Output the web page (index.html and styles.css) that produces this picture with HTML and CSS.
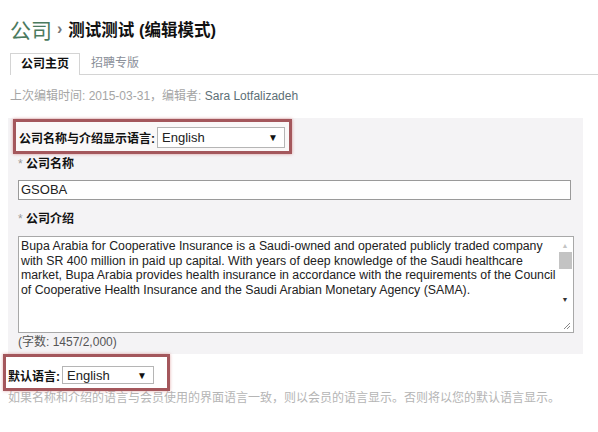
FILE: index.html
```html
<!DOCTYPE html>
<html lang="zh">

<head>
    <meta charset="UTF-8">
    <meta name="viewport" content="width=device-width, initial-scale=1.0">
    <title>公司主页</title>
    <link rel="stylesheet" href="styles.css">
</head>

<body>
    <div class="page">
        <h1 class="title">
            <span class="crumb">公司</span>
            <span class="sep">›</span>
            <span class="name">测试测试 (编辑模式)</span>
        </h1>

        <div class="tabs">
            <div class="tab active">公司主页</div>
            <div class="tab">招聘专版</div>
        </div>

        <p class="meta">上次编辑时间: 2015-03-31，编辑者: <span class="editor">Sara Lotfalizadeh</span></p>

        <div class="panel">
            <div class="mark mark-top">
                <span class="label">公司名称与介绍显示语言:</span>
                <div class="select select-wide">
                    <span>English</span>
                    <span class="arrow">▼</span>
                </div>
            </div>

            <div class="field-label"><span class="req">*</span> 公司名称</div>
            <div class="input">GSOBA</div>

            <div class="field-label"><span class="req">*</span> 公司介绍</div>
            <div class="textarea">
                <div class="textarea-text">
                    Bupa Arabia for Cooperative Insurance is a Saudi-owned and operated publicly traded company<br>
                    with SR 400 million in paid up capital. With years of deep knowledge of the Saudi healthcare<br>
                    market, Bupa Arabia provides health insurance in accordance with the requirements of the Council<br>
                    of Cooperative Health Insurance and the Saudi Arabian Monetary Agency (SAMA).
                </div>
                <div class="scrollbar">
                    <span class="sb-up">▲</span>
                    <span class="sb-thumb"></span>
                    <span class="sb-down">▼</span>
                    <svg class="grip" width="8" height="8" viewBox="0 0 8 8">
                        <path d="M1 7 L7 1 M4 7 L7 4" stroke="#888" stroke-width="1" fill="none" />
                    </svg>
                </div>
            </div>
            <div class="count">(字数: 1457/2,000)</div>
        </div>

        <div class="mark mark-bottom">
            <span class="label">默认语言:</span>
            <div class="select select-small">
                <span>English</span>
                <span class="arrow">▼</span>
            </div>
        </div>
        <p class="note">如果名称和介绍的语言与会员使用的界面语言一致，则以会员的语言显示。否则将以您的默认语言显示。</p>
    </div>
</body>

</html>
```

FILE: styles.css
```css
body {
    margin: 0;
    background: #fff;
    font-family: "Liberation Sans", "Noto Sans CJK SC", sans-serif;
    font-size: 12px;
    color: #222;
}

.page {
    padding: 13px 15px 0 0;
}

/* 标题 */
.title {
    display: flex;
    align-items: center;
    margin: 0 0 0 10px;
    height: 32px;
    font-weight: normal;
}

.crumb {
    font-size: 21px;
    color: #4b7a5e;
}

.sep {
    margin: 0 6px 0 5px;
    font-size: 16px;
    color: #777;
    font-weight: bold;
}

.name {
    font-size: 16.5px;
    font-weight: bold;
    color: #111;
}

/* 탭 */
.tabs {
    display: flex;
    align-items: flex-end;
    margin: 7px -15px 0 10px;
    height: 22px;
    border-bottom: 1px solid #d4d4d4;
}

.tab {
    padding: 0 11px;
    height: 21px;
    line-height: 21px;
    color: #8a8f99;
}

.tab.active {
    border: 1px solid #d4d4d4;
    border-bottom: none;
    background: #fff;
    height: 21px;
    margin-bottom: -1px;
    font-weight: bold;
    color: #111;
    padding: 0 10px;
}

.meta {
    margin: 13px 0 0 10px;
    color: #a5a5a5;
    height: 16px;
    line-height: 16px;
}

.editor {
    color: #5d6f76;
}

/* 회색 패널 */
.panel {
    margin: 14px 0 0 8px;
    padding: 1px 12px 5px 5px;
    background: #f4f3f5;
}

.mark {
    display: inline-flex;
    align-items: center;
    border: 3px solid #a4575c;
    box-shadow: 0 0 3px rgba(200, 90, 90, 0.6);
    background: #faf8f8;
}

.mark-top {
    padding: 5px 4px 3px 3px;
    gap: 2px;
}

.label {
    font-weight: bold;
    color: #111;
}

.select {
    display: flex;
    justify-content: space-between;
    align-items: center;
    height: 19px;
    padding: 0 6px 0 4px;
    border: 1px solid #b5b5b5;
    background: #fff;
    font-size: 13px;
    color: #222;
}

.select-wide {
    width: 116px;
}

.select-small {
    width: 80px;
    height: 16px;
}

.arrow {
    font-size: 10px;
    color: #111;
}

.field-label {
    margin: 2px 0 0 5px;
    height: 16px;
    line-height: 16px;
    font-weight: bold;
    color: #111;
}

.req {
    color: #999;
    font-weight: normal;
}

.input {
    margin: 8px 0 0 5px;
    height: 18px;
    line-height: 18px;
    padding-left: 2px;
    border: 1px solid #9a9a9a;
    background: #fff;
    font-size: 13px;
}

.input + .field-label {
    margin-top: 11px;
}

.textarea {
    display: flex;
    margin: 9px -3px 0 5px;
    height: 95px;
    border: 1px solid #a8a8a8;
    background: #fff;
}

.textarea-text {
    flex: 1;
    padding: 2px 0 0 2px;
    font-size: 12.3px;
    line-height: 14.7px;
    color: #222;
    white-space: nowrap;
}

.scrollbar {
    position: relative;
    width: 16px;
    display: flex;
    flex-direction: column;
    align-items: center;
}

.sb-up {
    font-size: 7px;
    color: #c4c4c4;
    margin-top: 5px;
}

.sb-thumb {
    width: 13px;
    height: 17px;
    margin-top: 3px;
    background: #c3c3c3;
}

.sb-down {
    font-size: 7px;
    color: #333;
    margin-top: 27px;
}

.grip {
    position: absolute;
    right: 2px;
    bottom: 2px;
}

.count {
    margin: 2px 0 0 5px;
    height: 14px;
    line-height: 14px;
    color: #555;
}

.mark-bottom {
    margin-left: 3px;
    padding: 9px 13px 4px 2px;
    gap: 2px;
    background: #fff;
    position: relative;
    z-index: 1;
    box-shadow: 0 0 3px rgba(200, 90, 90, 0.5);
}

.note {
    margin: -3px 0 0 8px;
    color: #b5b5b5;
    white-space: nowrap;
}
```
